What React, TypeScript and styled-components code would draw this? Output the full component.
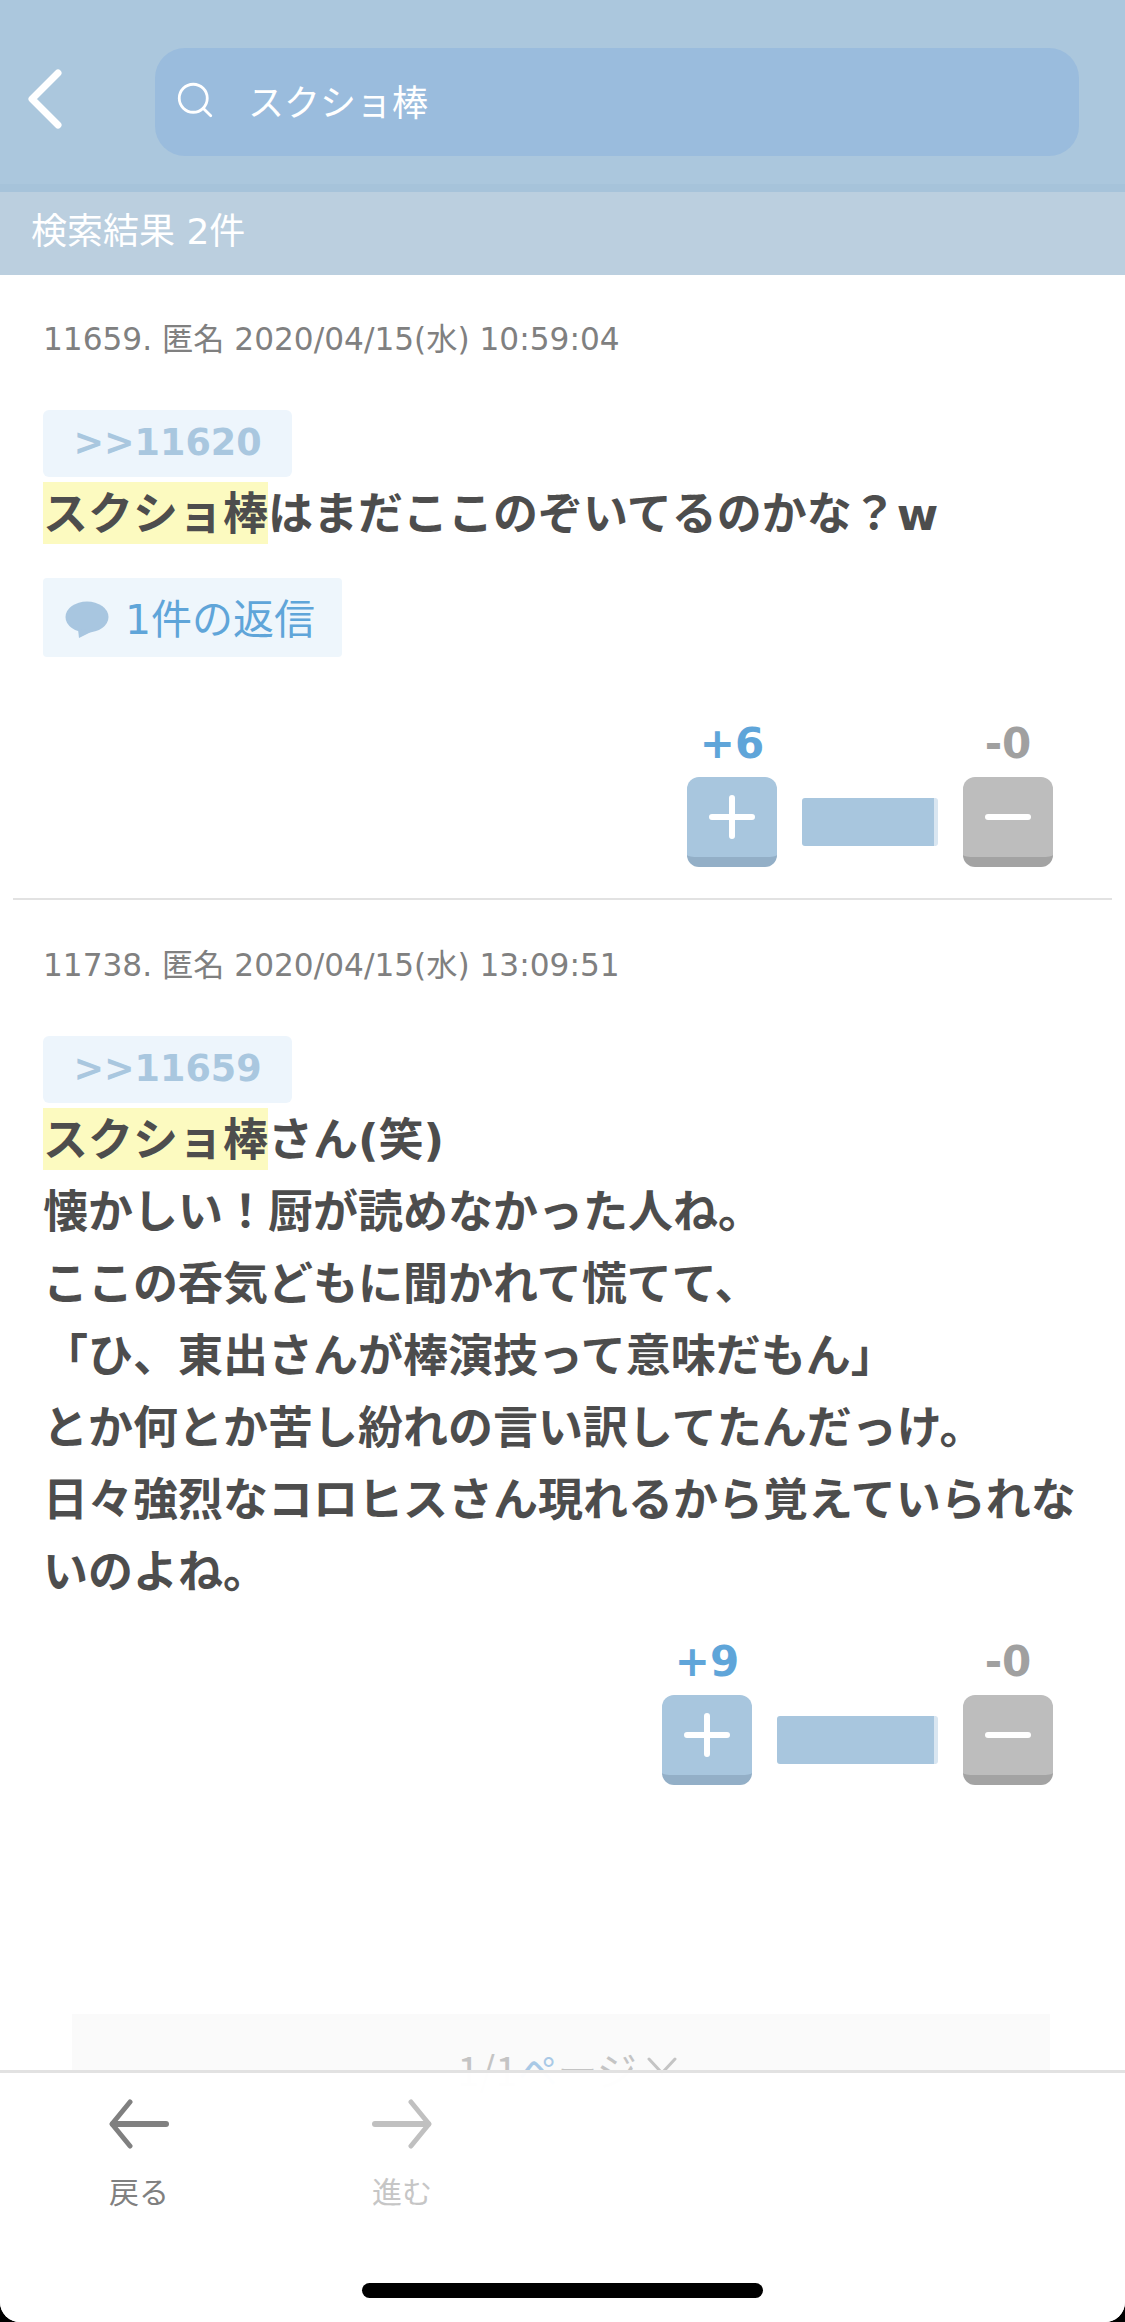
import React from "react";
import styled, { createGlobalStyle } from "styled-components";
import { Search } from "lucide-react";

const Global = createGlobalStyle`
  html, body { margin: 0; padding: 0; background: #000; }
  * { box-sizing: border-box; }
  body { font-family: "DejaVu Sans", "Noto Sans CJK JP", sans-serif; }
`;

const Screen = styled.div`
  position: relative;
  width: 1125px;
  height: 2322px;
  background: #fff;
  overflow: hidden;
  border-radius: 0 0 20px 20px;
`;

const TopBar = styled.header`
  height: 192px;
  background: #abc7dd;
  border-bottom: 8px solid #a6c3da;
  padding: 48px 46px 0 27px;
  display: flex;
  align-items: flex-start;
`;

const BackLink = styled.div`
  width: 128px;
  height: 108px;
  display: flex;
  align-items: center;
  padding-bottom: 6px;
`;

const SearchBox = styled.div`
  flex: 1;
  height: 108px;
  border-radius: 30px;
  background: #9abcdd;
  display: flex;
  align-items: center;
  padding: 0 0 4px 19px;
  gap: 32px;
  color: #fff;
`;

const SearchText = styled.span`
  font: 400 36px/1 "Noto Sans CJK JP", sans-serif;
`;

const ResultBar = styled.div`
  height: 83px;
  background: #bbcfdf;
  color: #fff;
  padding: 0 0 4px 31px;
  display: flex;
  align-items: center;
  font: 400 36px/1 "DejaVu Sans", "Noto Sans CJK JP", sans-serif;
`;

const Post = styled.article<{ $divided?: boolean }>`
  margin: 0 13px;
  padding: 44px 30px 0;
  display: flex;
  flex-direction: column;
  align-items: flex-start;
  height: ${(p) => (p.$divided ? "625px" : "1100px")};
  border-bottom: ${(p) => (p.$divided ? "2px solid #e2e2e2" : "none")};
  & + & {
    padding-top: 45px;
  }
  & > * {
    flex-shrink: 0;
  }
`;

const Meta = styled.div`
  color: #808080;
  font-size: 31.2px;
  line-height: 40px;
  font-family: "DejaVu Sans", "Noto Sans CJK JP", sans-serif;
`;

const Anchor = styled.div`
  margin-top: 51px;
  width: 249px;
  height: 67px;
  border-radius: 6px;
  background: #edf5fc;
  color: #a9c7df;
  display: flex;
  align-items: center;
  justify-content: center;
  font: 700 36.5px/1 "DejaVu Sans", sans-serif;
`;

const Body = styled.div`
  margin-top: 2px;
  width: 1050px;
  color: #4d4d4d;
  font: 700 45px/72px "DejaVu Sans", "Noto Sans CJK JP", sans-serif;
  word-break: break-all;
`;

const Mark = styled.span`
  background: #fcfac0;
  padding: 6px 0 3px;
`;

const ReplyButton = styled.div`
  margin-top: 27px;
  width: 299px;
  height: 79px;
  border-radius: 4px;
  background: #eef6fc;
  color: #5fa5d9;
  display: flex;
  align-items: center;
  gap: 16px;
  padding: 5px 0 0 22px;
  font: 400 41px/1 "DejaVu Sans", "Noto Sans CJK JP", sans-serif;
`;

const Votes = styled.div<{ $top: number }>`
  margin-top: ${(p) => p.$top}px;
  align-self: flex-end;
  display: flex;
  align-items: flex-end;
  margin-right: 29px;
`;

const VoteCol = styled.div`
  width: 90px;
  display: flex;
  flex-direction: column;
  align-items: center;
`;

const Count = styled.div<{ $up?: boolean }>`
  height: 50px;
  color: ${(p) => (p.$up ? "#5fa5d9" : "#a0a0a0")};
  font: 700 42px/50px "DejaVu Sans", sans-serif;
  margin-bottom: 8px;
`;

const VoteButton = styled.div<{ $up?: boolean }>`
  width: 90px;
  height: 90px;
  border-radius: 12px;
  background: ${(p) => (p.$up ? "#a8c6de" : "#bdbdbd")};
  border-bottom: 10px solid ${(p) => (p.$up ? "#93afc7" : "#a3a3a3")};
  display: flex;
  align-items: center;
  justify-content: center;
`;

const Ratio = styled.div<{ $width: number }>`
  width: ${(p) => p.$width}px;
  height: 48px;
  margin: 0 25px 21px;
  border-radius: 3px;
  background: #a8c6de;
  border-right: 4px solid #d9e6f1;
`;

const Pager = styled.div`
  margin: 229px 0 0 29px;
  width: 978px;
  height: 120px;
  background: #fafafa;
  padding: 31px 0 0 12px;
  display: flex;
  justify-content: center;
  align-items: flex-start;
  gap: 10px;
  color: #c4c4c4;
  font: 400 40px/48px "Noto Sans CJK JP", sans-serif;
`;

const PagerTint = styled.span`
  color: #a9c9e6;
`;

const BottomBar = styled.nav`
  position: absolute;
  left: 0;
  right: 0;
  bottom: 0;
  height: 252px;
  background: rgba(255, 255, 255, 0.98);
  border-top: 3px solid #e2e2e2;
  display: flex;
  padding: 26px 0 0 95px;
  gap: 175px;
`;

const NavItem = styled.div<{ $muted?: boolean }>`
  width: 88px;
  display: flex;
  flex-direction: column;
  align-items: center;
  gap: 19px;
  color: ${(p) => (p.$muted ? "#c6c6c6" : "#808080")};
  font: 400 30px/44px "Noto Sans CJK JP", sans-serif;
`;

const HomeBar = styled.div`
  position: absolute;
  left: 362px;
  bottom: 24px;
  width: 401px;
  height: 15px;
  border-radius: 8px;
  background: #000;
`;

const Plus = () => (
  <svg width="46" height="46" viewBox="0 0 46 46" fill="none" stroke="#fff" strokeWidth="6" strokeLinecap="round">
    <path d="M23 4v38M3 23h40" />
  </svg>
);

const Minus = () => (
  <svg width="46" height="46" viewBox="0 0 46 46" fill="none" stroke="#fff" strokeWidth="6" strokeLinecap="round">
    <path d="M3 23h40" />
  </svg>
);

const Arrow = ({ flip, color }: { flip?: boolean; color: string }) => (
  <svg
    width="60"
    height="50"
    viewBox="0 0 60 50"
    fill="none"
    stroke={color}
    strokeLinecap="round"
    strokeLinejoin="round"
    style={flip ? { transform: "scaleX(-1)" } : undefined}
  >
    <path d="M21 3 3 25l18 22" strokeWidth="5" />
    <path d="M4 25h53" strokeWidth="6" />
  </svg>
);

const VoteRow = ({ up, width, top }: { up: string; width: number; top: number }) => (
  <Votes $top={top}>
    <VoteCol>
      <Count $up>{up}</Count>
      <VoteButton $up>
        <Plus />
      </VoteButton>
    </VoteCol>
    <Ratio $width={width} />
    <VoteCol>
      <Count>-0</Count>
      <VoteButton>
        <Minus />
      </VoteButton>
    </VoteCol>
  </Votes>
);

export default function App() {
  return (
    <Screen>
      <Global />
      <TopBar>
        <BackLink>
          <svg width="36" height="60" viewBox="0 0 36 60" fill="none" stroke="#fff" strokeWidth="7" strokeLinecap="round" strokeLinejoin="round">
            <path d="M31 4 5 30l26 26" />
          </svg>
        </BackLink>
        <SearchBox>
          <Search size={42} strokeWidth={1.6} color="#fff" />
          <SearchText>スクショ棒</SearchText>
        </SearchBox>
      </TopBar>
      <ResultBar>検索結果 2件</ResultBar>

      <Post $divided>
        <Meta>11659. 匿名 2020/04/15(水) 10:59:04</Meta>
        <Anchor>&gt;&gt;11620</Anchor>
        <Body>
          <Mark>スクショ棒</Mark>はまだここのぞいてるのかな？w
        </Body>
        <ReplyButton>
          <svg width="44" height="38" viewBox="0 0 44 38">
            <ellipse cx="22" cy="16" rx="21.5" ry="15.5" fill="#a8c6e0" />
            <path d="M13 28l1 9 14-7z" fill="#a8c6e0" />
          </svg>
          1件の返信
        </ReplyButton>
        <VoteRow up="+6" width={136} top={62} />
      </Post>

      <Post>
        <Meta>11738. 匿名 2020/04/15(水) 13:09:51</Meta>
        <Anchor>&gt;&gt;11659</Anchor>
        <Body>
          <Mark>スクショ棒</Mark>さん(笑)
          <br />
          懐かしい！厨が読めなかった人ね。
          <br />
          ここの呑気どもに聞かれて慌てて、
          <br />
          「ひ、東出さんが棒演技って意味だもん」
          <br />
          とか何とか苦し紛れの言い訳してたんだっけ。
          <br />
          日々強烈なコロヒスさん現れるから覚えていられないのよね。
        </Body>
        <VoteRow up="+9" width={161} top={28} />
        <Pager>
          <span>
            1/1<PagerTint>ペ</PagerTint>ージ
          </span>
          <svg width="30" height="20" viewBox="0 0 30 20" fill="none" stroke="#c4c4c4" strokeWidth="3" strokeLinecap="round" style={{ marginTop: 12 }}>
            <path d="M2 2l13 14L28 2" />
          </svg>
        </Pager>
      </Post>

      <BottomBar>
        <NavItem>
          <Arrow color="#808080" />
          戻る
        </NavItem>
        <NavItem $muted>
          <Arrow flip color="#c0c0c0" />
          進む
        </NavItem>
      </BottomBar>
      <HomeBar />
    </Screen>
  );
}
